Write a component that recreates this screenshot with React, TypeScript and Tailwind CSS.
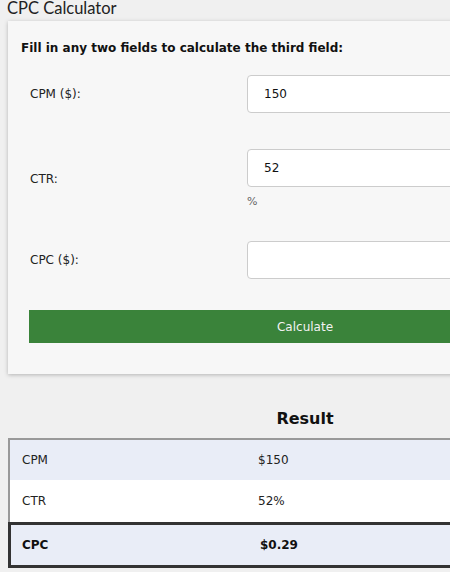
import React, { useState } from 'react'

const body = { fontFamily: '"DejaVu Sans", Verdana, sans-serif' }

function Field({ label, value, suffix }: { label: string; value: string; suffix?: string }) {
  return (
    <div className="flex items-center">
      <div className="w-[218px] pl-[1px] text-[12px] text-[#222]">{label}</div>
      <div className="flex-1">
        <input
          defaultValue={value}
          className="block h-[38px] w-full rounded-[4px] border border-[#cccccc] bg-white pl-[16px] text-[12px] text-[#111] outline-none"
          style={body}
        />
        {suffix ? <div className="mt-[8px] h-[14px] text-[11px] leading-[14px] text-[#666]">{suffix}</div> : null}
      </div>
    </div>
  )
}

export default function App() {
  const [rows] = useState([
    { name: 'CPM', value: '$150' },
    { name: 'CTR', value: '52%' },
  ])

  return (
    <div className="min-h-screen overflow-hidden bg-[#f0f0f0]" style={body}>
      <div
        className="pl-[7px] text-[16.5px] leading-[17px] text-[#222]"
        style={{ fontFamily: 'Lato, "Open Sans", sans-serif' }}
      >
        CPC Calculator
      </div>

      <div className="ml-[8px] mt-[4px] w-[594px] bg-[#f7f7f7] px-[13px] pb-[31px] pt-[19px] shadow-[0_1px_4px_rgba(0,0,0,0.25)]">
        <div className="text-[12px] font-bold leading-[16px] text-[#111]">
          Fill in any two fields to calculate the third field:
        </div>
        <div className="px-[8px]">
          <div className="mt-[19px]">
            <Field label="CPM ($):" value="150" />
          </div>
          <div className="mt-[36px]">
            <Field label="CTR:" value="52" suffix="%" />
          </div>
          <div className="mt-[32px]">
            <Field label="CPC ($):" value="" />
          </div>
          <button className="mt-[31px] block h-[33px] w-full bg-[#3a833a] text-[12px] text-[#f2f2f2]" style={body}>
            Calculate
          </button>
        </div>
      </div>

      <div className="ml-[8px] w-[594px]">
        <div className="mt-[35px] text-center text-[16px] font-bold leading-[20px] text-[#111]">Result</div>
        <div className="mt-[9px] border-l-2 border-t-2 border-[#999]">
          {rows.map((r, i) => (
            <div
              key={r.name}
              className={`flex items-center text-[12px] text-[#222] ${i === 0 ? 'h-[40px] bg-[#e9edf7]' : 'h-[42px] bg-white'}`}
            >
              <div className="w-[235px] pl-[12px]">{r.name}</div>
              <div className="flex-1 pl-[13px]">{r.value}</div>
            </div>
          ))}
        </div>
        <div className="flex h-[46px] items-center border-[3px] border-[#333] bg-[#e9edf7] text-[12px] font-bold text-[#111]">
          <div className="w-[236px] pl-[11px]">CPC</div>
          <div className="flex-1 pl-[13px]">$0.29</div>
        </div>
      </div>
    </div>
  )
}
